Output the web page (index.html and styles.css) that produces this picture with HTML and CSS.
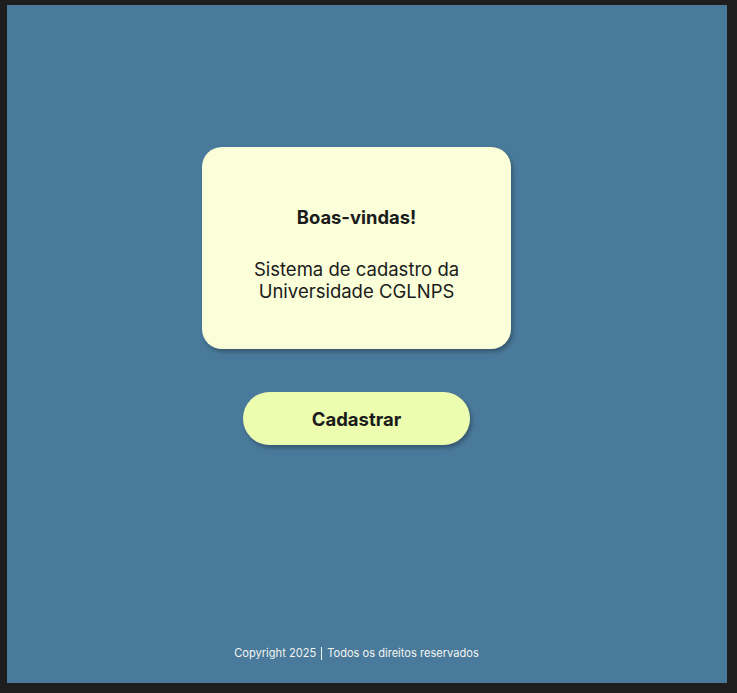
FILE: index.html
```html
<!DOCTYPE html>
<html lang="pt-BR">
<head>
<meta charset="utf-8">
<title>Boas-vindas</title>
<link rel="stylesheet" href="styles.css">
</head>
<body>
<main class="panel">
  <section class="card">
    <h1 class="card-title">Boas-vindas!</h1>
    <p class="card-text">Sistema de cadastro da<br>Universidade CGLNPS</p>
  </section>
  <button class="btn" type="button">Cadastrar</button>
  <footer class="footer">Copyright 2025<span class="sep"></span>Todos os direitos reservados</footer>
</main>
</body>
</html>
```
FILE: styles.css
```css
html, body {
  margin: 0;
  padding: 0;
  background: #1e1e1e;
  height: 100%;
}
body {
  padding: 5px 10px 10px 7px;
  box-sizing: border-box;
  font-family: Inter, "Noto Sans", sans-serif;
}
.panel {
  background: #4a7a9b;
  height: 678px;
  box-sizing: border-box;
  padding: 142px 21px 0 0;
  display: flex;
  flex-direction: column;
  align-items: center;
}
.card {
  width: 309px;
  height: 202px;
  box-sizing: border-box;
  background: #fafed9;
  border-radius: 20px;
  box-shadow: 2px 3px 4px rgba(0, 0, 0, 0.28);
  padding-top: 59px;
  text-align: center;
  color: #1b1b1b;
}
.card-title {
  margin: 0;
  font-size: 18.4px;
  line-height: 22px;
  font-weight: 700;
}
.card-text {
  margin: 30px 0 0;
  font-size: 18.5px;
  line-height: 22px;
  font-weight: 400;
}
.btn {
  margin-top: 43px;
  width: 227px;
  height: 53px;
  border: none;
  border-radius: 27px;
  background: #ecfdb0;
  box-shadow: 2px 3px 4px rgba(0, 0, 0, 0.28);
  font-family: Inter, "Noto Sans", sans-serif;
  font-size: 18.5px;
  font-weight: 700;
  color: #1b1b1b;
  padding: 0;
}
.footer {
  margin-top: auto;
  margin-bottom: 22px;
  font-size: 11.1px;
  line-height: 16px;
  color: #f2f4f0;
  display: flex;
  align-items: center;
}
.sep {
  display: inline-block;
  width: 0;
  height: 13px;
  border-left: 1px solid #f2f4f0;
  margin: 0 5px;
}
```
